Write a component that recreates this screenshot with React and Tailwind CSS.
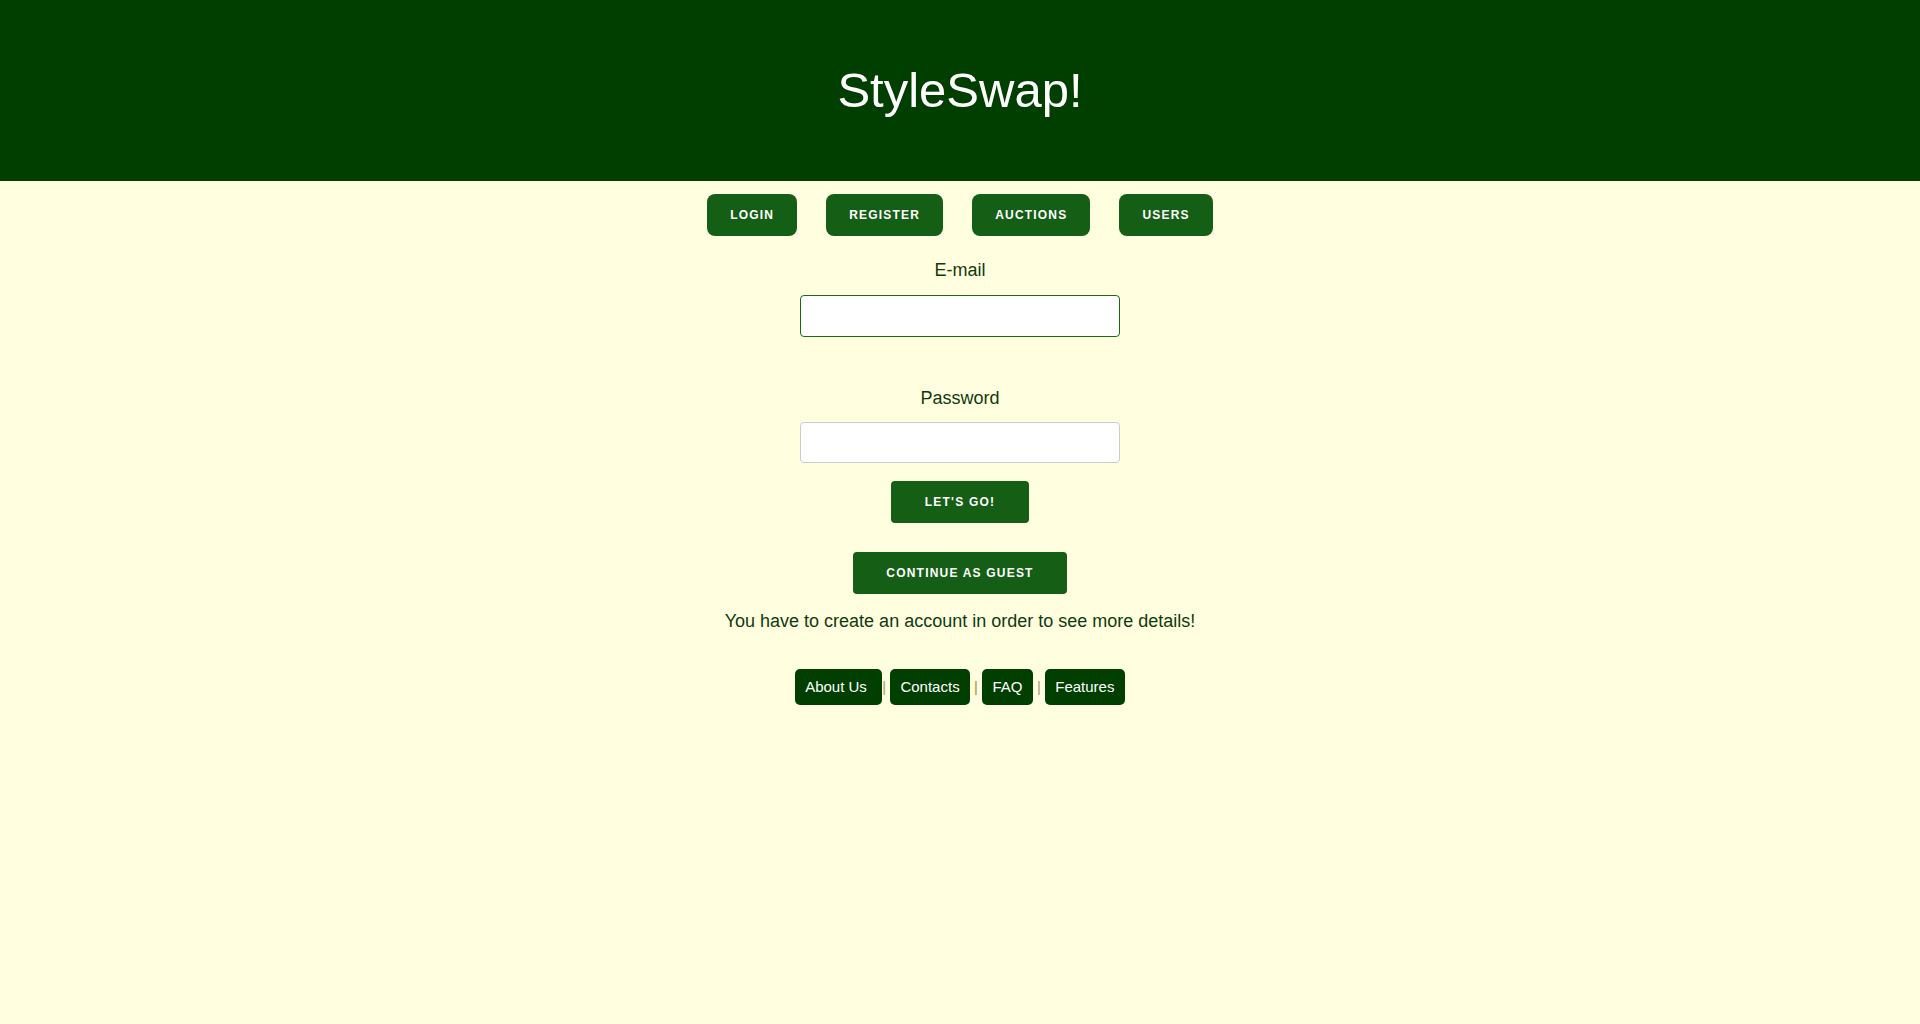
import React from "react"

const navItems = ["LOGIN", "REGISTER", "AUCTIONS", "USERS"]

export default function App() {
  return (
    <div className="min-h-screen bg-[#ffffe0] font-['Liberation_Sans',Arial,sans-serif] text-[#0f3a0f]">
      {/* Header */}
      <header className="h-[181px] bg-[#003f00] flex items-center justify-center">
        <h1 className="text-[49px] leading-[56px] text-white -mt-[2px]">StyleSwap!</h1>
      </header>

      {/* Nav */}
      <nav className="flex justify-center gap-[29px] mt-[13px]">
        {navItems.map((item) => (
          <button
            key={item}
            className="h-[42px] px-[23px] rounded-lg bg-[#155e15] text-white text-[12px] font-bold tracking-[0.1em]"
          >
            {item}
          </button>
        ))}
      </nav>

      {/* Login form */}
      <form className="flex flex-col items-center" onSubmit={(e) => e.preventDefault()}>
        <label className="mt-[24px] text-[18px] leading-[21px]">E-mail</label>
        <input
          type="email"
          className="mt-[14px] w-[320px] h-[42px] bg-white border border-[#1a6a1a] rounded-[4px] px-2 outline-none"
        />
        <label className="mt-[51px] text-[18px] leading-[21px]">Password</label>
        <input
          type="password"
          className="mt-[13px] w-[320px] h-[41px] bg-white border border-[#cccccc] rounded-[4px] px-2 outline-none"
        />
        <button className="mt-[18px] h-[42px] w-[138px] rounded-[4px] bg-[#155e15] text-white text-[12px] font-bold tracking-[0.1em]">
          LET'S GO!
        </button>
      </form>

      <div className="flex flex-col items-center">
        <button className="mt-[29px] h-[42px] w-[214px] rounded-[4px] bg-[#155e15] text-white text-[12px] font-bold tracking-[0.1em]">
          CONTINUE AS GUEST
        </button>
        <p className="mt-[17px] text-[18px] leading-[21px]">
          You have to create an account in order to see more details!
        </p>

        {/* Footer links */}
        <footer className="mt-[37px] flex items-center text-[15px]">
          <a className="h-[36px] w-[87px] pl-[10px] flex items-center rounded-[5px] bg-[#003f00] text-white">About Us</a>
          <span className="mr-[4px] text-[#a89a70]">|</span>
          <a className="h-[36px] w-[80px] flex items-center justify-center rounded-[5px] bg-[#003f00] text-white">Contacts</a>
          <span className="mx-[4px] text-[#b08a3a]">|</span>
          <a className="h-[36px] w-[51px] flex items-center justify-center rounded-[5px] bg-[#003f00] text-white">FAQ</a>
          <span className="mx-[4px] text-[#a89a70]">|</span>
          <a className="h-[36px] w-[80px] flex items-center justify-center rounded-[5px] bg-[#003f00] text-white">Features</a>
        </footer>
      </div>
    </div>
  )
}
